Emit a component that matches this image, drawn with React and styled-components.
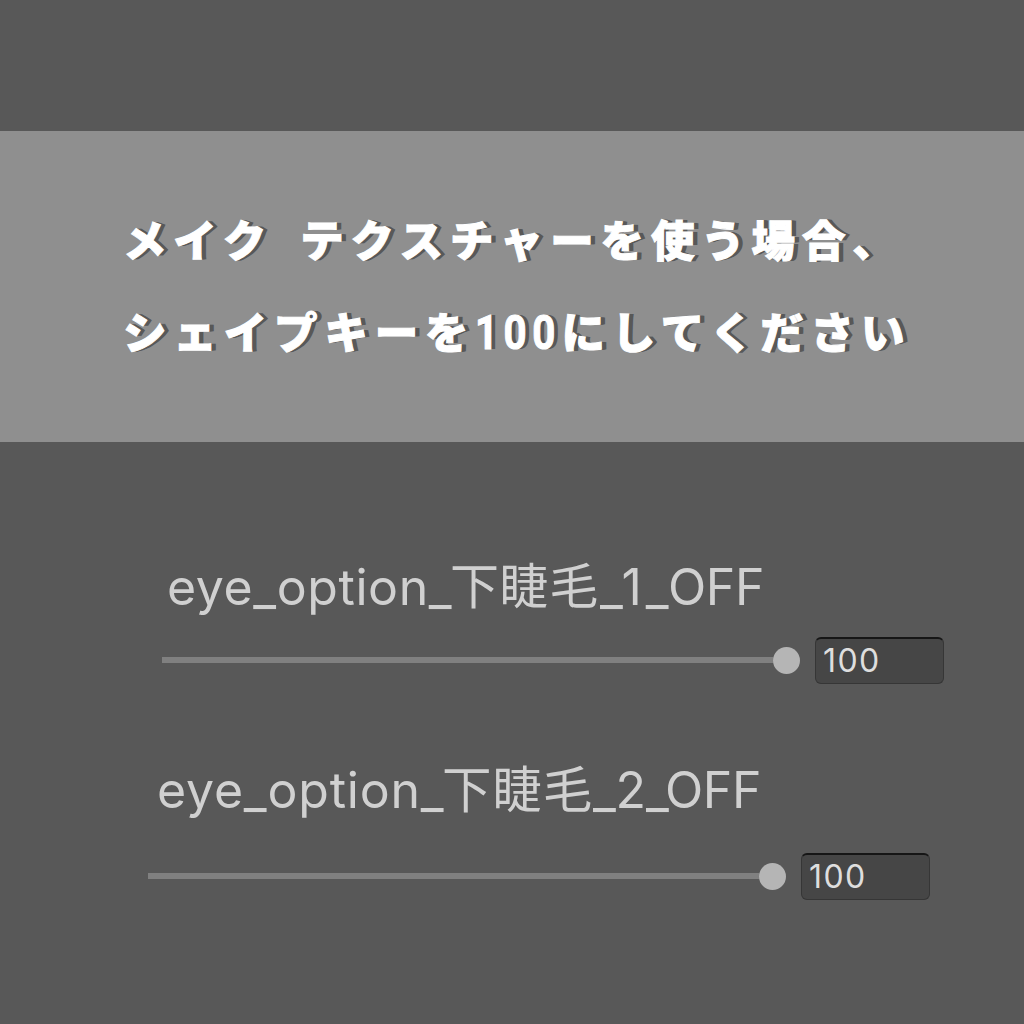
import React from "react";
import styled, { createGlobalStyle } from "styled-components";

const GlobalStyle = createGlobalStyle`
  body {
    margin: 0;
    background: #585858;
  }
`;

const SPage = styled.main`
  width: 1024px;
  height: 1024px;
  overflow: hidden;
  box-sizing: border-box;
  padding-top: 131px;
  background: #585858;
`;

const SBanner = styled.header`
  height: 311px;
  box-sizing: border-box;
  padding: 62px 0 0 123px;
  background: #8f8f8f;
`;

const SBannerLine = styled.p`
  margin: 0;
  height: 92px;
  line-height: 92px;
  white-space: nowrap;
  font-family: "Noto Sans CJK JP", sans-serif;
  font-weight: 900;
  font-size: 43.5px;
  letter-spacing: 6.85px;
  color: #fff;
  -webkit-text-stroke: 1px #fff;
  text-shadow: 1px 0 #585858, 2px 0 #585858, 3px 0 #585858, 4px 0 #585858,
    5px 0 #585858;
`;

const SSpace = styled.span`
  display: inline-block;
  width: 27px;
`;

const SNumber = styled.span`
  display: inline-block;
  width: 86px;
  line-height: 1;
  font-family: Roboto, sans-serif;
  font-weight: 700;
  font-size: 48px;
  letter-spacing: 6.5px;
  transform: scaleX(0.84);
  transform-origin: left;
`;

const SOption = styled.section`
  padding-left: ${({ $left }) => $left}px;
  padding-top: ${({ $top }) => $top}px;
`;

const SLabel = styled.div`
  display: flex;
  height: 60px;
  line-height: 60px;
  padding-left: ${({ $indent }) => $indent}px;
  white-space: nowrap;
  font-family: Inter, "Noto Sans CJK JP", sans-serif;
  font-size: 50px;
  color: #d0d0d0;
`;

const SPart = styled.span`
  flex: none;
  width: ${({ $width }) => $width}px;
  font-size: ${({ $size }) => $size || 50}px;
  letter-spacing: ${({ $spacing }) => $spacing || 0}px;
`;

const SControl = styled.div`
  display: flex;
  align-items: center;
  height: 46px;
  margin-top: ${({ $gap }) => $gap}px;
`;

const STrack = styled.div`
  width: 611px;
  height: 6px;
  background: #808080;
`;

const SThumb = styled.div`
  width: 27px;
  height: 27px;
  border-radius: 50%;
  background: #b5b5b5;
`;

const SField = styled.div`
  align-self: flex-start;
  width: 129px;
  height: 47px;
  box-sizing: border-box;
  margin-left: 15px;
  padding-left: 7px;
  border: 1px solid #363636;
  border-top: 2px solid #161616;
  border-radius: 6px;
  background: #464646;
  font-family: Inter, sans-serif;
  font-size: 32px;
  line-height: 44px;
  letter-spacing: 1.4px;
  color: #dedede;
`;

const OPTIONS = [
  {
    left: 162,
    top: 115,
    indent: 5,
    gap: 20,
    value: 100,
    parts: [
      { text: "eye_option_", width: 283, spacing: 0.6 },
      { text: "下睫毛", width: 150, size: 49, spacing: 0.6 },
      { text: "_1_", width: 68, spacing: 4 },
      { text: "OFF", width: 100, spacing: -0.4 },
    ],
  },
  {
    left: 148,
    top: 77,
    indent: 9,
    gap: 33,
    value: 100,
    parts: [
      { text: "eye_option_", width: 285, spacing: 0.8 },
      { text: "下睫毛", width: 151, size: 49.5, spacing: 0.9 },
      { text: "_2_", width: 72, spacing: -0.2 },
      { text: "OFF", width: 100, spacing: -0.4 },
    ],
  },
];

const Option = ({ left, top, indent, gap, value, parts }) => (
  <SOption $left={left} $top={top}>
    <SLabel $indent={indent}>
      {parts.map((part) => (
        <SPart
          key={part.text}
          $width={part.width}
          $size={part.size}
          $spacing={part.spacing}
        >
          {part.text}
        </SPart>
      ))}
    </SLabel>
    <SControl $gap={gap}>
      <STrack />
      <SThumb />
      <SField>{value}</SField>
    </SControl>
  </SOption>
);

const App = () => (
  <>
    <GlobalStyle />
    <SPage>
      <SBanner>
        <SBannerLine>
          メイク
          <SSpace />
          テクスチャーを使う場合、
        </SBannerLine>
        <SBannerLine>
          シェイプキーを<SNumber>100</SNumber>にしてください
        </SBannerLine>
      </SBanner>
      {OPTIONS.map((option) => (
        <Option key={option.left} {...option} />
      ))}
    </SPage>
  </>
);

export default App;
